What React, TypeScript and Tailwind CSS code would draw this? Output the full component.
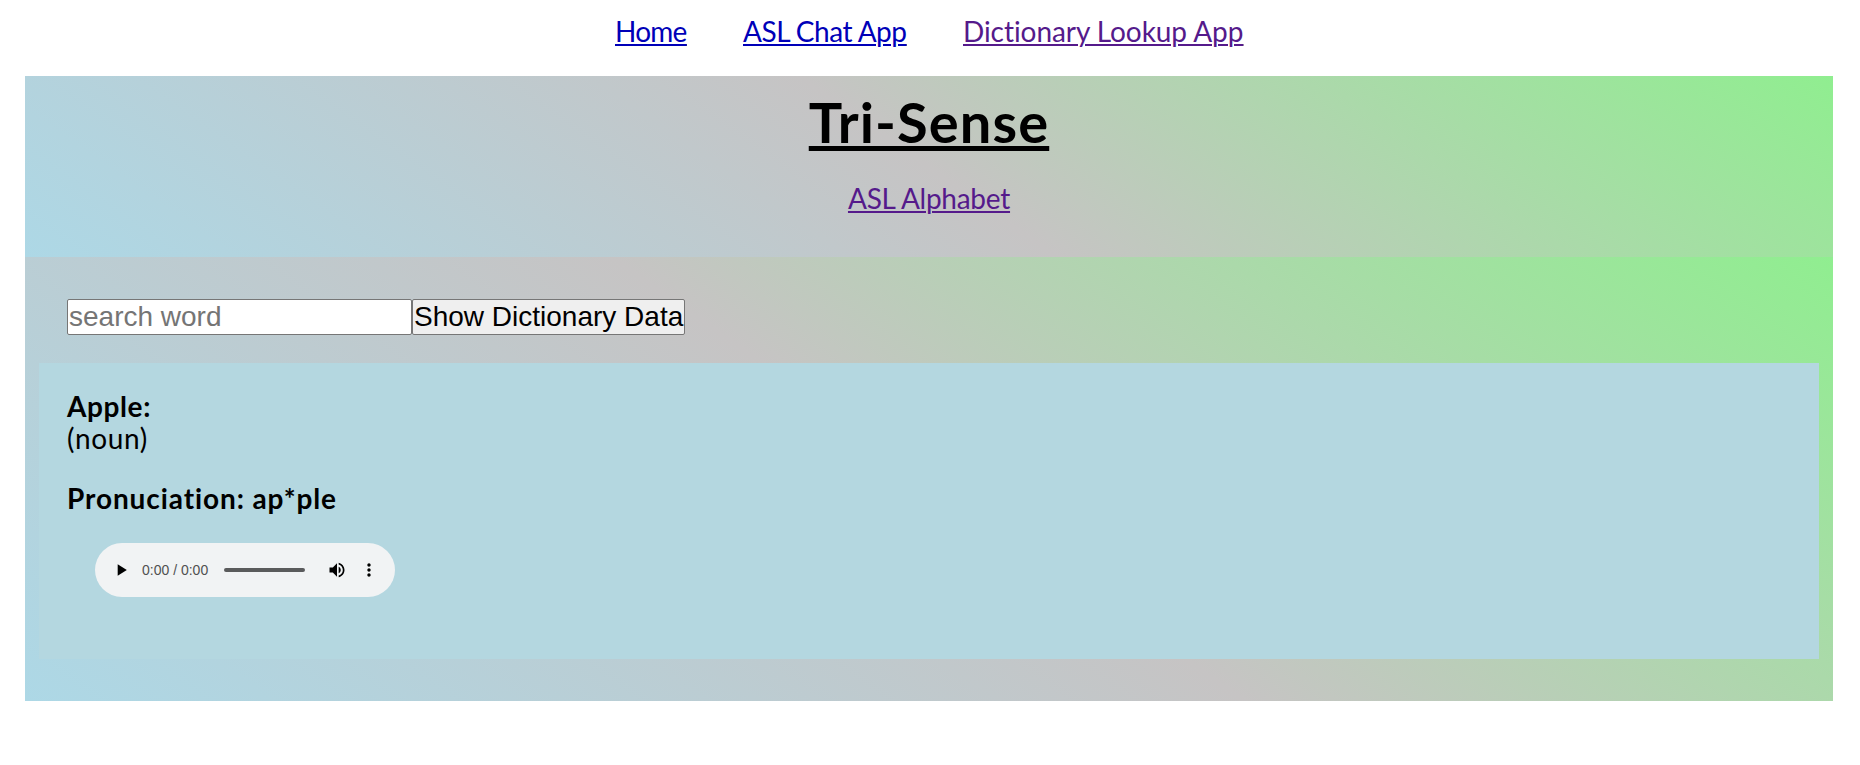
function PlayIcon() {
  return (
    <svg viewBox="0 0 24 24" className="size-5" fill="#000">
      <path d="M8 5v14l11-7z" />
    </svg>
  );
}

function VolumeIcon() {
  return (
    <svg viewBox="0 0 24 24" className="size-5" fill="#000">
      <path d="M3 9v6h4l5 5V4L7 9H3zm13.5 3c0-1.77-1.02-3.29-2.5-4.03v8.05c1.48-.73 2.5-2.25 2.5-4.02zM14 3.23v2.06c2.89.86 5 3.54 5 6.71s-2.11 5.85-5 6.71v2.06c4.01-.91 7-4.49 7-8.77s-2.99-7.86-7-8.77z" />
    </svg>
  );
}

function MoreIcon() {
  return (
    <svg viewBox="0 0 24 24" className="size-5" fill="#000">
      <path d="M12 8c1.1 0 2-.9 2-2s-.9-2-2-2-2 .9-2 2 .9 2 2 2zm0 2c-1.1 0-2 .9-2 2s.9 2 2 2 2-.9 2-2-.9-2-2-2zm0 6c-1.1 0-2 .9-2 2s.9 2 2 2 2-.9 2-2-.9-2-2-2z" />
    </svg>
  );
}

function AudioPlayer() {
  return (
    <div className="ml-7 mt-[29px] flex h-[54px] w-[300px] items-center rounded-full bg-[#f1f3f4]">
      <button className="ml-4 shrink-0"><PlayIcon /></button>
      <span className="ml-[11px] w-[82px] shrink-0 whitespace-nowrap font-['Liberation_Sans',Arial,sans-serif] text-sm leading-none text-[#505050]">0:00 / 0:00</span>
      <div className="h-1 w-[81px] shrink-0 rounded-full bg-[#5a5b5c]" />
      <button className="ml-[22px] shrink-0"><VolumeIcon /></button>
      <button className="ml-3 shrink-0"><MoreIcon /></button>
    </div>
  );
}

export default function App() {
  return (
    <div className="min-h-[765px] bg-white pl-[25px] pr-[27px] font-['Trebuchet_MS',Lato,sans-serif] text-[28px] leading-8 text-black [font-variant-ligatures:none]">
      <nav className="flex h-[76px] justify-center gap-14 pt-[15px] underline decoration-2 underline-offset-2">
        <a href="#" className="w-[72px] whitespace-nowrap tracking-[-0.75px] text-[#0000b8]">Home</a>
        <a href="#" className="w-[164px] whitespace-nowrap tracking-[-0.5px] text-[#0000b8]">ASL Chat App</a>
        <a href="#" className="w-[280px] whitespace-nowrap tracking-[-0.06px] text-[#551a8b]">Dictionary Lookup App</a>
      </nav>
      <header className="flex h-[181px] flex-col items-center bg-[linear-gradient(35deg,#add8e6,#c6c4c4,#90ee90)] pt-[13px]">
        <h1 className="text-[56px] font-bold leading-[65px] tracking-[1.1px] underline decoration-[5px] underline-offset-[3px]">Tri-Sense</h1>
        <a href="#" className="mt-[28px] whitespace-nowrap tracking-[-0.25px] text-[#551a8b] underline decoration-2 underline-offset-2">ASL Alphabet</a>
      </header>
      <main className="h-[444px] bg-[linear-gradient(35deg,#add8e6,#c6c4c4,#90ee90)] px-[14px] pt-[42px]">
        <form className="flex pl-7 font-['Liberation_Sans',Arial,sans-serif]">
          <input placeholder="search word" className="h-9 w-[345px] rounded-[2px] border border-[#767676] bg-white px-px placeholder:text-[#757575] placeholder:opacity-100" />
          <button type="button" className="h-9 w-[273px] whitespace-nowrap rounded-[2px] border border-[#767676] bg-[#efefef] px-px">Show Dictionary Data</button>
        </form>
        <section className="mt-7 h-[296px] bg-[#b4d7e0] pl-7 pt-[27px]">
          <h2 className="font-bold tracking-[0.6px]">Apple:</h2>
          <p className="tracking-[0.65px]">(noun)</p>
          <p className="mt-7 font-bold tracking-[0.9px]">Pronuciation: ap*ple</p>
          <AudioPlayer />
        </section>
      </main>
    </div>
  );
}
